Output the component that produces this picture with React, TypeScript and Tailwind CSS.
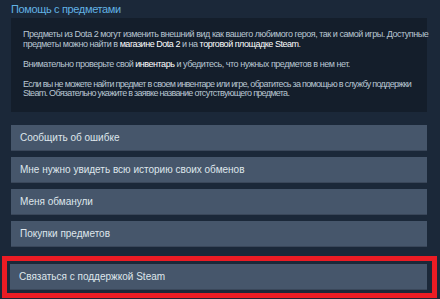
import React from "react";

const btn =
  "h-[26px] flex items-center pl-[9px] bg-[#46566b] text-[#dfe6ec] text-[10px] leading-none border-b border-[#3a475a]";

export default function App() {
  return (
    <div
      className="w-[440px] h-[299px] overflow-hidden bg-[#1b2839]"
      style={{ fontFamily: '"Liberation Sans", Arial, sans-serif' }}
    >
      <div className="pl-[11px] pt-[2px] h-[18px] text-[11px] leading-[14px] tracking-[-0.35px] text-[#62b2e4]">
        Помощь с предметами
      </div>
      <div className="ml-[11px] w-[416px] h-[94px] bg-[#141e2b] pl-[12px] pt-[12px] text-[9px] leading-[9.5px] text-[#b9c6d2] whitespace-nowrap">
        <p className="tracking-[-0.47px]">
          Предметы из Dota 2 могут изменить внешний вид как вашего любимого героя, так и самой игры. Доступные
          <br />
          предметы можно найти в <span className="text-white">магазине Dota 2</span> и на{" "}
          <span className="text-white">торговой площадке Steam</span>.
        </p>
        <p className="mt-[11px] tracking-[-0.47px]">
          Внимательно проверьте свой <span className="text-white">инвентарь</span> и убедитесь, что нужных предметов в нем нет.
        </p>
        <p className="mt-[10px] tracking-[-0.7px]">
          Если вы не можете найти предмет в своем инвентаре или игре, обратитесь за помощью в службу поддержки
          <br />
          Steam. Обязательно укажите в заявке название отсутствующего предмета.
        </p>
      </div>
      <div className="ml-[11px] w-[416px] mt-[13px] flex flex-col gap-[6px]">
        <div className={btn}>Сообщить об ошибке</div>
        <div className={btn}>Мне нужно увидеть всю историю своих обменов</div>
        <div className={btn}>Меня обманули</div>
        <div className={btn}>Покупки предметов</div>
      </div>
      <div className="ml-[2px] w-[435px] mt-[9px] border-[5px] border-[#ec1c24] pl-[3px] pr-[5px] pt-[3px] pb-[3px]">
        <div className={btn}>Связаться с поддержкой Steam</div>
      </div>
    </div>
  );
}
